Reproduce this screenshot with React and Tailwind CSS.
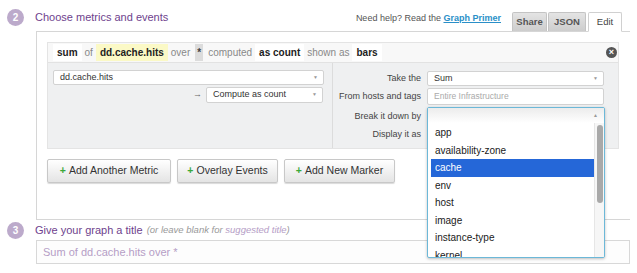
import React from 'react';

const font = { fontFamily: '"Liberation Sans", Arial, sans-serif' };

const tags = ['app', 'availability-zone', 'cache', 'env', 'host', 'image', 'instance-type', 'kernel'];

function StepBadge({ n }) {
  return (
    <div className="w-[17px] h-[17px] rounded-full bg-[#bcaacb] text-white text-[10px] font-bold flex items-center justify-center ml-[7px] mr-[11px] shrink-0">
      {n}
    </div>
  );
}

function Token({ children, className = '' }) {
  return <span className={`h-[17px] px-[4px] flex items-center font-bold text-[#222] ${className}`}>{children}</span>;
}

function Select({ value, className = '', placeholder = false, arrow = true }) {
  return (
    <div className={`bg-white border border-[#d2d2d2] rounded-[2px] flex items-center justify-between pl-[6px] pr-[5px] ${className}`}>
      <span className={placeholder ? 'text-[#aaa] text-[8.5px]' : 'text-[#333] text-[9px]'}>{value}</span>
      {arrow && <span className="text-[#999] text-[5px]">▼</span>}
    </div>
  );
}

function AddButton({ label, w }) {
  return (
    <button className={`h-[24px] ${w} border border-[#c8c8c8] rounded-[2px] bg-gradient-to-b from-white to-[#e4e4e4] shadow-[0_1px_1px_rgba(0,0,0,0.15)] text-[10.5px] text-[#333] flex items-center justify-center`}>
      <span className="text-[#3aa83a] font-bold mr-[3px]">+</span>
      {label}
    </button>
  );
}

export default function App() {
  return (
    <div className="relative w-[637px] h-[273px] bg-white overflow-hidden text-[#333]" style={font}>
      {/* step 2 header */}
      <div className="flex items-end h-[31px]">
        <div className="flex items-center self-start mt-[9px]">
          <StepBadge n="2" />
          <span className="text-[11px] text-[#6e3f8d] leading-none">Choose metrics and events</span>
        </div>
        <div className="ml-auto flex items-end mr-[15px]">
          <span className="text-[9px] text-[#555] mb-[6px] mr-[11px]">
            Need help? Read the{' '}
            <span className="text-[#2a8fc8] font-bold underline">Graph Primer</span>
          </span>
          <div className="h-[19px] w-[35px] mr-[1px] border border-[#c4c4c4] border-b-0 rounded-t-[2px] bg-gradient-to-b from-[#e4e4e4] to-[#cdcdcd] text-[9.5px] font-bold text-[#555] flex items-center justify-center">Share</div>
          <div className="h-[19px] w-[38px] mr-[2px] border border-[#c4c4c4] border-b-0 rounded-t-[2px] bg-gradient-to-b from-[#e4e4e4] to-[#cdcdcd] text-[9.5px] font-bold text-[#555] flex items-center justify-center">JSON</div>
          <div className="h-[20px] w-[34px] -mb-px border border-[#d0d0d0] border-b-white rounded-t-[2px] bg-white text-[9.5px] text-[#444] flex items-center justify-center">Edit</div>
        </div>
      </div>

      {/* metrics box */}
      <div className="ml-[36px] mr-[7px] border-t border-l border-b border-[#d6d6d6] pt-[10px] pl-[10px] h-[189px]">
        <div className="w-[572px] bg-[#eff0f1] border border-[#e4e4e4]">
          <div className="h-[20px] bg-[#f8f8f8] border-b border-[#e2e2e2] flex items-center pl-[5px] pr-[1px] text-[10px] text-[#888] gap-[3px]">
            <Token className="bg-white">sum</Token>
            <span>of</span>
            <Token className="bg-[#fbf9c6]">dd.cache.hits</Token>
            <span>over</span>
            <span className="px-[2px] bg-[#dcdcdc] text-[#444] font-bold h-[17px] flex items-center mx-[2px]">*</span>
            <span>computed</span>
            <Token className="bg-white">as count</Token>
            <span>shown as</span>
            <Token className="bg-white">bars</Token>
            <span className="ml-auto w-[11px] h-[11px] rounded-full bg-[#555] text-white text-[9px] leading-none font-bold flex items-center justify-center">×</span>
          </div>
          <div className="flex h-[85px]">
            <div className="w-[285px] border-r border-[#dcdcdc] pl-[5px] pt-[7px]">
              <Select value="dd.cache.hits" className="w-[271px] h-[15px]" />
              <div className="flex items-center justify-end mt-[2px] pr-[9px]">
                <span className="text-[#666] text-[9px] mr-[4px]">→</span>
                <Select value="Compute as count" className="w-[117px] h-[16px]" />
              </div>
            </div>
            <div className="flex-1 pt-[8px]">
              <div className="grid grid-cols-[88px_177px] gap-x-[6px] text-[9px] text-[#444]">
                <div className="text-right h-[15px] leading-[15px]">Take the</div>
                <Select value="Sum" className="h-[15px]" />
                <div className="text-right h-[17px] leading-[17px] mt-[2px]">From hosts and tags</div>
                <Select value="Entire Infrastructure" placeholder arrow={false} className="h-[17px] mt-[2px]" />
                <div className="text-right h-[18px] leading-[18px] mt-[2px]">Break it down by</div>
                <div />
                <div className="text-right h-[18px] leading-[18px]">Display it as</div>
                <div />
              </div>
            </div>
          </div>
        </div>
        <div className="flex gap-[6px] mt-[10px] -ml-[0px]">
          <AddButton label="Add Another Metric" w="w-[124px]" />
          <AddButton label="Overlay Events" w="w-[101px]" />
          <AddButton label="Add New Marker" w="w-[111px]" />
        </div>
      </div>

      {/* step 3 */}
      <div className="flex items-center mt-[2px] h-[17px]">
        <StepBadge n="3" />
        <span className="text-[11px] text-[#6e3f8d]">Give your graph a title</span>
        <span className="text-[9.5px] italic text-[#999] ml-[4px]">
          (or leave blank for <span className="text-[#b59dc6]">suggested title</span>)
        </span>
      </div>
      <div className="ml-[36px] mr-[7px] mt-[1px] h-[24px] border border-[#d8d8d8] bg-[#fdfdfd] flex items-center pl-[6px] text-[11px] text-[#b59dc6]">
        Sum of dd.cache.hits over *
      </div>

      {/* open "break it down by" dropdown */}
      <div className="absolute left-[427px] top-[107px] w-[178px] h-[151px] border border-[#6cb8d8] bg-white shadow-[0_1px_3px_rgba(0,0,0,0.25)] rounded-[2px] overflow-hidden">
        <div className="h-[15px] bg-gradient-to-b from-[#ececec] to-white flex items-center justify-end pr-[6px]">
          <span className="text-[#999] text-[5px]">▲</span>
        </div>
        <div className="flex">
          <div className="flex-1 pl-[3px] pt-[1px]">
            {tags.map((t) => (
              <div
                key={t}
                className={`h-[17.5px] pl-[4px] flex items-center text-[10px] ${t === 'cache' ? 'bg-[#2567d8] text-white' : 'text-[#1a1a1a]'}`}
              >
                {t}
              </div>
            ))}
          </div>
          <div className="w-[10px] bg-[#f6f6f6] border-l border-[#e6e6e6] pt-[2px] flex justify-center">
            <div className="w-[6px] h-[78px] rounded-full bg-[#a9a9a9]" />
          </div>
        </div>
      </div>
    </div>
  );
}
